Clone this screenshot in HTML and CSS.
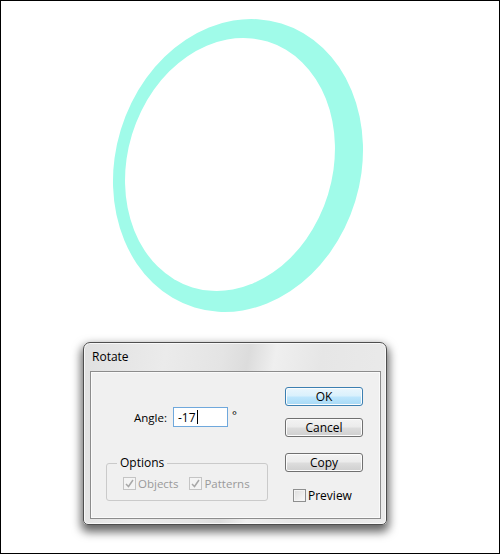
FILE: index.html
```html
<html>
    <head>
        <title>Rotate</title>
        <link rel="stylesheet" href="styles.css">
    </head>
    <body>
        <div class="page">
            <svg class="art" width="498" height="341" viewBox="0 0 498 341">
                <ellipse cx="237" cy="164.5" rx="122.6" ry="148.5" fill="#a0fbe9" transform="rotate(17 237 164.5)"/>
                <ellipse cx="229" cy="163.5" rx="102.5" ry="128.5" fill="#ffffff" transform="rotate(17 229 163.5)"/>
            </svg>
            <div class="dialog">
                <div class="title">Rotate</div>
                <div class="client">
                    <div class="left">
                        <div class="angle-row">
                            <span class="angle-label">Angle:</span>
                            <div class="field">-17<span class="caret"></span></div>
                            <span class="deg">&deg;</span>
                        </div>
                        <fieldset class="options">
                            <legend>Options</legend>
                            <span class="check disabled">
                                <span class="box">
                                    <svg width="11" height="11" viewBox="0 0 11 11"><path d="M2 6 L4.5 8.5 L9 2" fill="none" stroke="#a8a8a8" stroke-width="1.5"/></svg>
                                </span>Objects
                            </span>
                            <span class="check disabled">
                                <span class="box">
                                    <svg width="11" height="11" viewBox="0 0 11 11"><path d="M2 6 L4.5 8.5 L9 2" fill="none" stroke="#a8a8a8" stroke-width="1.5"/></svg>
                                </span>Patterns
                            </span>
                        </fieldset>
                    </div>
                    <div class="right">
                        <div class="button default">OK</div>
                        <div class="button cancel">Cancel</div>
                        <div class="button copy">Copy</div>
                        <span class="check preview"><span class="box"></span>Preview</span>
                    </div>
                </div>
            </div>
        </div>
    </body>
</html>
```

FILE: styles.css
```css
body {
    margin: 0;
    padding: 0;
    background-color: #fff;
    font-family: "Open Sans", "Noto Sans", sans-serif;
    font-size: 11.5px;
    color: #000;
}
.page {
    width: 498px;
    height: 552px;
    border: 1px solid #000;
    background-color: #fff;
}
.art {
    display: block;
}
.dialog {
    box-sizing: border-box;
    width: 304px;
    height: 183px;
    margin-left: 82px;
    padding: 0 5px 5px 6px;
    border: 1px solid #4e4e4e;
    border-radius: 7px 7px 5px 5px;
    background: linear-gradient(100deg, #e0e0e0 0%, #ebebeb 25%, #e4e4e4 42%, #dcdcdc 50%, #efefef 58%, #e6e6e6 72%, #ebebeb 100%);
    box-shadow: 0 5px 10px 2px rgba(0, 0, 0, 0.6), inset 0 0 0 1px rgba(255, 255, 255, 0.7);
}
.title {
    height: 28px;
    line-height: 28px;
    padding-left: 2px;
    font-size: 12px;
}
.client {
    box-sizing: border-box;
    height: 148px;
    display: flex;
    gap: 17px;
    padding: 15px 0 0 15px;
    border: 1px solid #8c8c8c;
    background-color: #f0f0f0;
    box-shadow: inset 0 0 0 1px #fafafa;
}
.left {
    width: 162px;
}
.angle-row {
    display: flex;
    align-items: center;
    margin-top: 20px;
    height: 20px;
}
.angle-label {
    width: 61px;
    text-align: right;
    margin-right: 6px;
}
.field {
    box-sizing: border-box;
    width: 55px;
    height: 20px;
    padding-left: 4px;
    border: 1px solid #6fa8dc;
    background-color: #fff;
    display: flex;
    align-items: center;
    font-size: 12px;
}
.caret {
    display: inline-block;
    width: 1px;
    height: 14px;
    margin-left: 1px;
    background-color: #000;
}
.deg {
    margin-left: 4px;
    margin-top: -5px;
}
.options {
    margin: 28px 0 0 0;
    padding: 6px 0 10px 16px;
    border: 1px solid #cacaca;
    border-radius: 3px;
    display: flex;
    gap: 11px;
}
.options legend {
    margin-left: -6px;
    padding: 0 3px;
    line-height: 16px;
    font-size: 12px;
}
.check {
    display: flex;
    align-items: center;
    gap: 2px;
    height: 13px;
}
.box {
    box-sizing: border-box;
    width: 13px;
    height: 13px;
    border: 1px solid #8e8f8f;
    background: linear-gradient(135deg, #dcdcdc, #fbfbfb);
    box-shadow: inset 0 0 0 1px #f4f4f4;
    display: flex;
    align-items: center;
    justify-content: center;
}
.disabled {
    color: #9a9a9a;
}
.disabled .box {
    border-color: #c4c4c4;
    background: #f4f4f4;
    box-shadow: none;
}
.right {
    width: 78px;
}
.button {
    box-sizing: border-box;
    height: 19px;
    line-height: 17px;
    text-align: center;
    border: 1px solid #707070;
    border-radius: 3px;
    background: linear-gradient(#f3f3f3 0%, #ebebeb 48%, #dddddd 52%, #cfcfcf 100%);
    box-shadow: inset 0 0 0 1px #fcfcfc;
    font-size: 12px;
}
.default {
    border-color: #3c7fb1;
    background: linear-gradient(#eaf6fd 0%, #d9f0fc 48%, #bee6fd 52%, #a7d9f5 100%);
}
.cancel {
    margin-top: 12px;
}
.copy {
    margin-top: 16px;
}
.preview {
    margin-top: 17px;
    margin-left: 8px;
    font-size: 12px;
}
```
